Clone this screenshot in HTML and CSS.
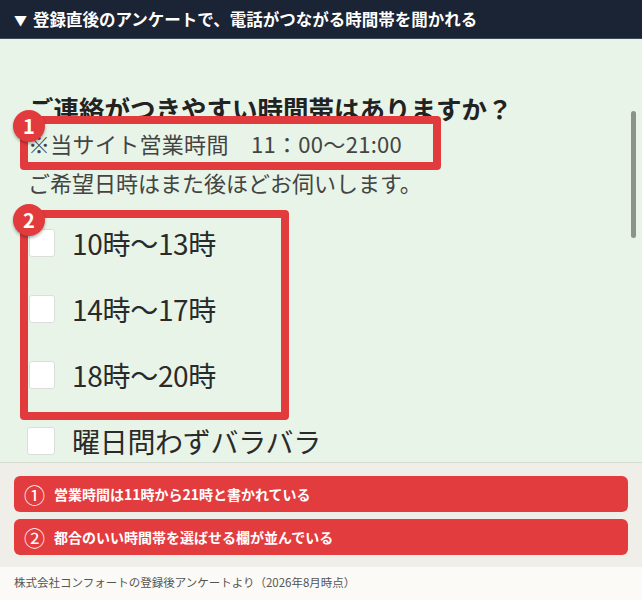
FILE: index.html
```html
<!DOCTYPE html>
<html lang="ja">
<head>
<meta charset="utf-8">
<title>アンケート</title>
<link rel="stylesheet" href="styles.css">
</head>
<body>
<div class="page">
  <header class="header"><span class="tri">▼</span>登録直後のアンケートで、電話がつながる時間帯を聞かれる</header>
  <section class="panel">
    <h1 class="title">ご連絡がつきやすい時間帯はありますか？</h1>
    <div class="hl hl-note">
      <span class="badge">1</span>
      <p class="note">※当サイト営業時間　11：00〜21:00</p>
    </div>
    <p class="sub">ご希望日時はまた後ほどお伺いします。</p>
    <div class="hl hl-list">
      <span class="badge">2</span>
      <div class="opt"><span class="cb"></span><span class="lbl">10時〜13時</span></div>
      <div class="opt"><span class="cb"></span><span class="lbl">14時〜17時</span></div>
      <div class="opt"><span class="cb"></span><span class="lbl">18時〜20時</span></div>
    </div>
    <div class="opt opt-last"><span class="cb"></span><span class="lbl">曜日問わずバラバラ</span></div>
    <div class="scrollbar"></div>
  </section>
  <section class="points">
    <div class="bar"><span class="num">①</span>営業時間は11時から21時と書かれている</div>
    <div class="bar"><span class="num">②</span>都合のいい時間帯を選ばせる欄が並んでいる</div>
  </section>
  <footer class="footer">株式会社コンフォートの登録後アンケートより（2026年8月時点）</footer>
</div>
</body>
</html>
```
FILE: styles.css
```css
* { box-sizing: border-box; }
html, body { margin: 0; padding: 0; }
body {
  font-family: "Noto Sans CJK JP", "Noto Sans", sans-serif;
  background: #fbfaf6;
}
.page {
  width: 642px;
  height: 600px;
  overflow: hidden;
  display: flex;
  flex-direction: column;
}
.header {
  height: 39px;
  flex: none;
  background: #1b2434;
  border-bottom: 1px solid #3d4a5a;
  color: #ffffff;
  font-weight: 700;
  font-size: 16.5px;
  display: flex;
  align-items: center;
  padding-left: 14px;
  white-space: nowrap;
}
.tri { font-size: 13px; margin-right: 6px; }
.panel {
  position: relative;
  height: 424px;
  flex: none;
  background: #e7f4e7;
  border-bottom: 1px solid #d6dbd2;
  padding: 54px 0 0 28px;
  overflow: hidden;
}
.title {
  margin: 0;
  font-size: 25.5px;
  line-height: 30px;
  font-weight: 700;
  color: #222222;
  white-space: nowrap;
}
.hl {
  position: relative;
  margin-left: -8px;
  border: 8px solid #e23b3d;
  border-radius: 4px;
}
.hl-note {
  margin-top: -7px;
  width: 421px;
  height: 54px;
  padding-top: 1px;
}
.note {
  margin: 0;
  font-size: 22px;
  line-height: 36px;
  color: #444444;
  white-space: nowrap;
  letter-spacing: 0.3px;
}
.sub {
  margin: 0;
  font-size: 22px;
  line-height: 24px;
  color: #444444;
  white-space: nowrap;
}
.hl-list {
  margin-top: 16px;
  width: 269px;
  height: 210px;
  padding-top: 0;
  display: flex;
  flex-direction: column;
  gap: 16px;
}
.badge {
  position: absolute;
  left: -15px;
  top: -14px;
  width: 32px;
  height: 32px;
  border-radius: 50%;
  background: #e23b3d;
  color: #ffffff;
  font-weight: 700;
  font-size: 20px;
  line-height: 32px;
  text-align: center;
  box-shadow: 0 2px 3px rgba(0, 0, 0, 0.3);
  z-index: 2;
}
.opt {
  height: 50px;
  display: flex;
  align-items: center;
}
.opt-last { height: 42px; }
.cb {
  width: 28px;
  height: 28px;
  margin-left: -1px;
  background: #ffffff;
  border: 1px solid #dcdedb;
  border-radius: 3px;
  flex: none;
}
.hl-list .cb { margin-left: 1px; width: 26px; }
.lbl {
  margin-left: 17px;
  font-size: 28px;
  color: #2a2a2a;
  white-space: nowrap;
  letter-spacing: -0.3px;
}
.scrollbar {
  position: absolute;
  left: 631px;
  top: 72px;
  width: 5px;
  height: 127px;
  border-radius: 3px;
  background: #8b948a;
}
.points {
  height: 104px;
  flex: none;
  background: #efeee8;
  padding: 13px 14px 0 14px;
  display: flex;
  flex-direction: column;
  gap: 7px;
}
.bar {
  height: 36px;
  background: #e33c3e;
  border-radius: 6px;
  color: #ffffff;
  font-weight: 700;
  font-size: 14px;
  display: flex;
  align-items: center;
  padding-left: 10px;
  white-space: nowrap;
}
.num {
  font-size: 21px;
  font-weight: 400;
  margin-right: 9px;
}
.footer {
  flex: 1;
  background: #fbfaf6;
  color: #555555;
  font-size: 11.5px;
  padding: 7px 0 0 14px;
  white-space: nowrap;
}
```
